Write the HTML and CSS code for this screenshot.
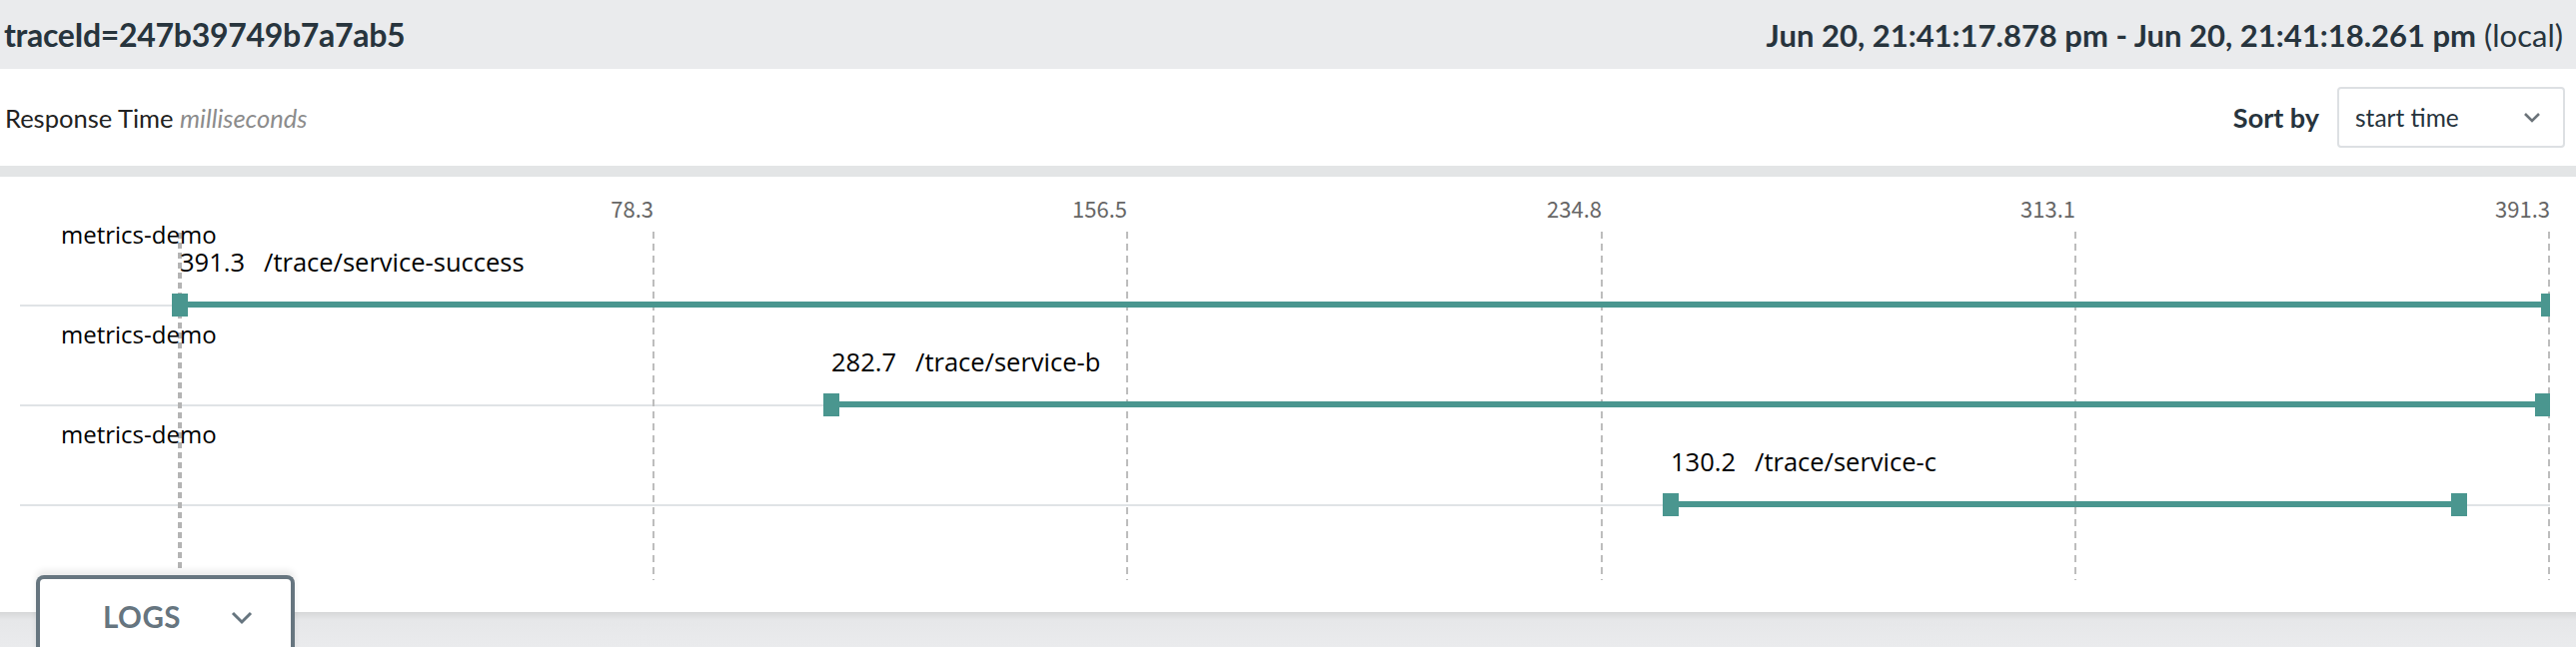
FILE: index.html
```html
<!DOCTYPE html>
<html lang="en">
<head>
<meta charset="utf-8">
<title>Trace 247b39749b7a7ab5</title>
<link rel="stylesheet" href="styles.css">
</head>
<body>
<div class="page">
  <header class="trace-header">
    <h1 class="trace-id">traceId=247b39749b7a7ab5</h1>
    <div class="trace-time"><strong>Jun 20, 21:41:17.878 pm - Jun 20, 21:41:18.261 pm</strong> (local)</div>
  </header>

  <div class="toolbar">
    <div class="rt-label">Response Time <em>milliseconds</em></div>
    <div class="sort">
      <span class="sort-label">Sort by</span>
      <div class="select">
        <span class="select-value">start time</span>
        <svg class="select-chevron" width="18" height="12" viewBox="0 0 18 12"><path d="M2 2 L9 9 L16 2" fill="none" stroke="#6b7379" stroke-width="2.6"/></svg>
      </div>
    </div>
  </div>

  <div class="divider"></div>

  <div class="timeline">
    <svg class="timeline-svg" width="2578" height="436" viewBox="0 0 2578 436">
      <g class="ticks">
        <text x="654" y="41">78.3</text>
        <text x="1128" y="41">156.5</text>
        <text x="1603" y="41">234.8</text>
        <text x="2077" y="41">313.1</text>
        <text x="2552" y="41">391.3</text>
      </g>
      <g class="rowlines">
        <line x1="20" y1="129" x2="2552" y2="129"/>
        <line x1="20" y1="229" x2="2552" y2="229"/>
        <line x1="20" y1="329" x2="2552" y2="329"/>
      </g>
      <g class="gridlines">
        <line x1="654" y1="55" x2="654" y2="404"/>
        <line x1="1128" y1="55" x2="1128" y2="404"/>
        <line x1="1603" y1="55" x2="1603" y2="404"/>
        <line x1="2077" y1="55" x2="2077" y2="404"/>
        <line x1="2551" y1="55" x2="2551" y2="404"/>
      </g>
      <line class="startline" x1="180" y1="56" x2="180" y2="396"/>

      <g class="span">
        <text class="svc" x="61" y="67">metrics-demo</text>
        <text class="lbl" x="180" y="95">391.3<tspan dx="19">/trace/service-success</tspan></text>
        <line class="bar" x1="180" y1="128" x2="2551" y2="128"/>
        <rect class="mark" x="172" y="117" width="16" height="23"/>
        <rect class="mark" x="2543" y="117" width="9" height="23"/>
      </g>
      <g class="span">
        <text class="svc" x="61" y="167">metrics-demo</text>
        <text class="lbl" x="832" y="195">282.7<tspan dx="19">/trace/service-b</tspan></text>
        <line class="bar" x1="832" y1="228" x2="2545" y2="228"/>
        <rect class="mark" x="824" y="217" width="16" height="23"/>
        <rect class="mark" x="2537" y="217" width="15" height="23"/>
      </g>
      <g class="span">
        <text class="svc" x="61" y="267">metrics-demo</text>
        <text class="lbl" x="1672" y="295">130.2<tspan dx="19">/trace/service-c</tspan></text>
        <line class="bar" x1="1672" y1="328" x2="2461" y2="328"/>
        <rect class="mark" x="1664" y="317" width="16" height="23"/>
        <rect class="mark" x="2453" y="317" width="16" height="23"/>
      </g>
    </svg>
  </div>

  <div class="logs-bar">
    <div class="logs-tab">
      <span class="logs-label">LOGS</span>
      <svg class="logs-chevron" width="22" height="14" viewBox="0 0 22 14"><path d="M2 2 L11 11 L20 2" fill="none" stroke="#66757f" stroke-width="3"/></svg>
    </div>
  </div>
</div>
</body>
</html>
```

FILE: styles.css
```css
html, body {
  margin: 0;
  padding: 0;
  background: #ffffff;
}

.page {
  width: 2578px;
  height: 648px;
  overflow: hidden;
  font-family: "Lato", "Open Sans", sans-serif;
  color: #27343d;
  display: flex;
  flex-direction: column;
}

.trace-header {
  height: 69px;
  flex: none;
  background: #eaebed;
  display: flex;
  align-items: center;
  justify-content: space-between;
  padding: 0 13px 0 4px;
  box-sizing: border-box;
}

.trace-id {
  margin: 0;
  font-size: 32px;
  line-height: 40px;
  font-weight: 700;
  color: #27343d;
  letter-spacing: -0.3px;
}

.trace-time {
  font-size: 31px;
  line-height: 40px;
  font-weight: 400;
  color: #27343d;
}

.trace-time strong {
  font-weight: 700;
}

.toolbar {
  height: 97px;
  flex: none;
  display: flex;
  align-items: center;
  justify-content: space-between;
  padding: 0 11px 0 5px;
  box-sizing: border-box;
}

.rt-label {
  font-size: 25.5px;
  line-height: 32px;
  color: #222222;
}

.rt-label em {
  color: #8c8c8c;
}

.sort {
  display: flex;
  align-items: center;
  gap: 18px;
}

.sort-label {
  font-size: 27px;
  line-height: 32px;
  font-weight: 700;
  color: #27343d;
}

.select {
  width: 228px;
  height: 61px;
  box-sizing: border-box;
  border: 2px solid #dde0e3;
  border-radius: 4px;
  display: flex;
  align-items: center;
  justify-content: space-between;
  padding: 0 22px 0 16px;
}

.select-value {
  font-size: 24.5px;
  line-height: 32px;
  color: #27343d;
}

.divider {
  height: 11px;
  flex: none;
  background: #e3e5e6;
}

.timeline {
  height: 436px;
  flex: none;
}

.timeline-svg {
  display: block;
}

.ticks text {
  font-family: "Noto Sans CJK SC", "Lato", sans-serif;
  font-size: 22px;
  fill: #666666;
  text-anchor: end;
}

.rowlines line {
  stroke: #e0e3e6;
  stroke-width: 2;
}

.gridlines line {
  stroke: #bdbdbd;
  stroke-width: 2;
  stroke-dasharray: 7 5;
}

.startline {
  stroke: #b4b4b4;
  stroke-width: 4;
  stroke-dasharray: 6 4;
}

.svc {
  font-family: "Open Sans", sans-serif;
  font-size: 24px;
  fill: #000000;
}

.lbl {
  font-family: "Open Sans", sans-serif;
  font-size: 25.5px;
  fill: #000000;
}

.bar {
  stroke: #4a968f;
  stroke-width: 6;
}

.mark {
  fill: #4a968f;
}

.logs-bar {
  flex: 1;
  position: relative;
  background: linear-gradient(#d6d7d8, #e6e7e9 8px, #eaebed);
}

.logs-tab {
  position: absolute;
  left: 36px;
  top: -37px;
  width: 259px;
  height: 80px;
  box-sizing: border-box;
  background: #ffffff;
  border: 4px solid #66757f;
  border-bottom: none;
  border-radius: 8px 8px 0 0;
  box-shadow: 0 -5px 6px rgba(0, 0, 0, 0.08);
  display: flex;
  align-items: flex-start;
  padding: 20px 0 0 63px;
  gap: 50px;
}

.logs-label {
  font-size: 29.5px;
  font-weight: 700;
  color: #66757f;
  letter-spacing: 0.5px;
  line-height: 36px;
}

.logs-chevron {
  margin-top: 12px;
}
```
